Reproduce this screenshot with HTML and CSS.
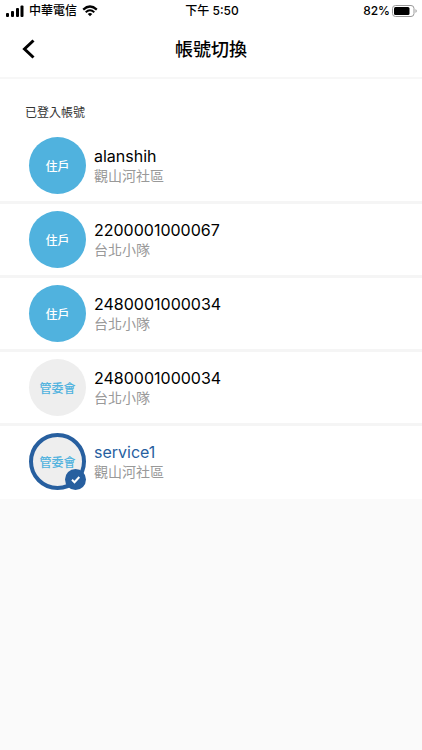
FILE: index.html
```html
<!DOCTYPE html>
<html lang="zh-Hant">

<head>
  <meta charset="utf-8">
  <meta name="viewport" content="width=device-width, initial-scale=1">
  <title>帳號切換</title>
  <link rel="stylesheet" href="styles.css">
</head>

<body>
  <div class="statusbar">
    <div class="carrier">
      <svg width="18" height="12" viewBox="0 0 18 12">
        <rect x="0" y="8" width="3" height="4" rx="1" />
        <rect x="5" y="6" width="3" height="6" rx="1" />
        <rect x="10" y="3" width="3" height="9" rx="1" />
        <rect x="14.5" y="0.5" width="3" height="11.5" rx="1" />
      </svg>
      <span>中華電信</span>
      <svg width="16" height="12" viewBox="0 0 16 12">
        <path d="M1.2 4.6 Q8 -1.6 14.8 4.6" fill="none" stroke="#000" stroke-width="2.2" />
        <path d="M3.7 7.2 Q8 3.3 12.3 7.2" fill="none" stroke="#000" stroke-width="2" />
        <path d="M5.7 8.9 Q8 7 10.3 8.9 L8 11.3 Z" />
      </svg>
    </div>
    <div class="time">下午 5:50</div>
    <div class="battery">
      <span>82%</span>
      <svg width="26" height="12" viewBox="0 0 26 12">
        <rect x="0.5" y="0.5" width="21.5" height="11" rx="3" fill="none" stroke="#999" />
        <rect x="2" y="2" width="15.5" height="8" rx="1.5" />
        <path d="M23.5 4 Q26 6 23.5 8 Z" fill="#999" />
      </svg>
    </div>
  </div>

  <header class="navbar">
    <button class="back" type="button" aria-label="返回">
      <svg width="14" height="20" viewBox="0 0 14 20">
        <path d="M11.5 1.5 L2.5 10 L11.5 18.5" fill="none" stroke="#000" stroke-width="3" />
      </svg>
    </button>
    <h1>帳號切換</h1>
  </header>

  <main>
    <h2>已登入帳號</h2>
    <ul class="accounts">
      <li>
        <button class="account" type="button">
          <span class="avatar">住戶</span>
          <span class="info">
            <span class="name">alanshih</span>
            <span class="place">觀山河社區</span>
          </span>
        </button>
      </li>
      <li>
        <button class="account" type="button">
          <span class="avatar">住戶</span>
          <span class="info">
            <span class="name">2200001000067</span>
            <span class="place">台北小隊</span>
          </span>
        </button>
      </li>
      <li>
        <button class="account" type="button">
          <span class="avatar">住戶</span>
          <span class="info">
            <span class="name">2480001000034</span>
            <span class="place">台北小隊</span>
          </span>
        </button>
      </li>
      <li>
        <button class="account" type="button">
          <span class="avatar committee">管委會</span>
          <span class="info">
            <span class="name">2480001000034</span>
            <span class="place">台北小隊</span>
          </span>
        </button>
      </li>
      <li>
        <button class="account selected" type="button" aria-current="true">
          <span class="avatar committee">管委會
            <svg class="check" width="21" height="21" viewBox="0 0 21 21">
              <circle cx="10.5" cy="10.5" r="10.5" fill="#275f9f" />
              <path d="M7 10.8 L9.5 13.2 L14.3 8" fill="none" stroke="#fff" stroke-width="2" />
            </svg>
          </span>
          <span class="info">
            <span class="name">service1</span>
            <span class="place">觀山河社區</span>
          </span>
        </button>
      </li>
    </ul>
  </main>
</body>

</html>
```
FILE: styles.css
```css
* {
  box-sizing: border-box;
}

body {
  margin: 0;
  background: #fafafa;
  color: #000;
  font-family: Inter, "Noto Sans CJK TC", sans-serif;
}

button {
  border: none;
  background: none;
  padding: 0;
  color: inherit;
  font-family: inherit;
  cursor: pointer;
}

svg {
  display: block;
  flex: none;
}

/* status bar */
.statusbar {
  display: grid;
  grid-template-columns: 1fr auto 1fr;
  align-items: center;
  height: 21px;
  padding: 0 4px 0 6px;
  background: #fff;
  font-size: 12px;
  line-height: 21px;
  font-weight: 500;
}

.carrier,
.battery {
  display: flex;
  align-items: center;
  gap: 5px;
}

.battery {
  justify-content: flex-end;
  gap: 2px;
}

/* title bar */
.navbar {
  display: grid;
  grid-template-columns: 58px 1fr 58px;
  align-items: center;
  height: 58px;
  background: #fff;
  border-bottom: 2px solid #f7f7f7;
}

.back {
  display: flex;
  align-items: center;
  justify-content: center;
  height: 40px;
}

h1 {
  margin: 0;
  padding-top: 2px;
  font-size: 18px;
  line-height: 28px;
  font-weight: 500;
  text-align: center;
}

main {
  background: #fff;
  padding: 25px 0 2px;
}

h2 {
  margin: 0;
  padding: 0 25px 8px;
  color: #333;
  font-size: 12px;
  line-height: 18px;
  font-weight: 400;
}

/* account list */
.accounts {
  list-style: none;
  margin: 0;
  padding: 0;
}

.accounts li + li {
  border-top: 3px solid #f5f5f5;
}

.account {
  display: flex;
  align-items: center;
  gap: 8px;
  width: 100%;
  padding: 7px 29px;
  text-align: left;
}

.avatar {
  position: relative;
  display: flex;
  flex: none;
  align-items: center;
  justify-content: center;
  width: 57px;
  height: 57px;
  border-radius: 50%;
  background: #50b2de;
  color: #fff;
  font-size: 12px;
  font-weight: 500;
}

.committee {
  background: #eee;
  color: #50b2de;
}

.info {
  display: flex;
  flex-direction: column;
}

.name {
  font-size: 16px;
  line-height: 20px;
}

.place {
  color: #999;
  font-size: 14px;
  line-height: 20px;
}

.selected .avatar {
  border: 4px solid #275f9f;
}

.selected .name {
  color: #275f9f;
}

/* sits on the avatar's ring */
.check {
  position: absolute;
  right: -4px;
  bottom: -4px;
}
```
